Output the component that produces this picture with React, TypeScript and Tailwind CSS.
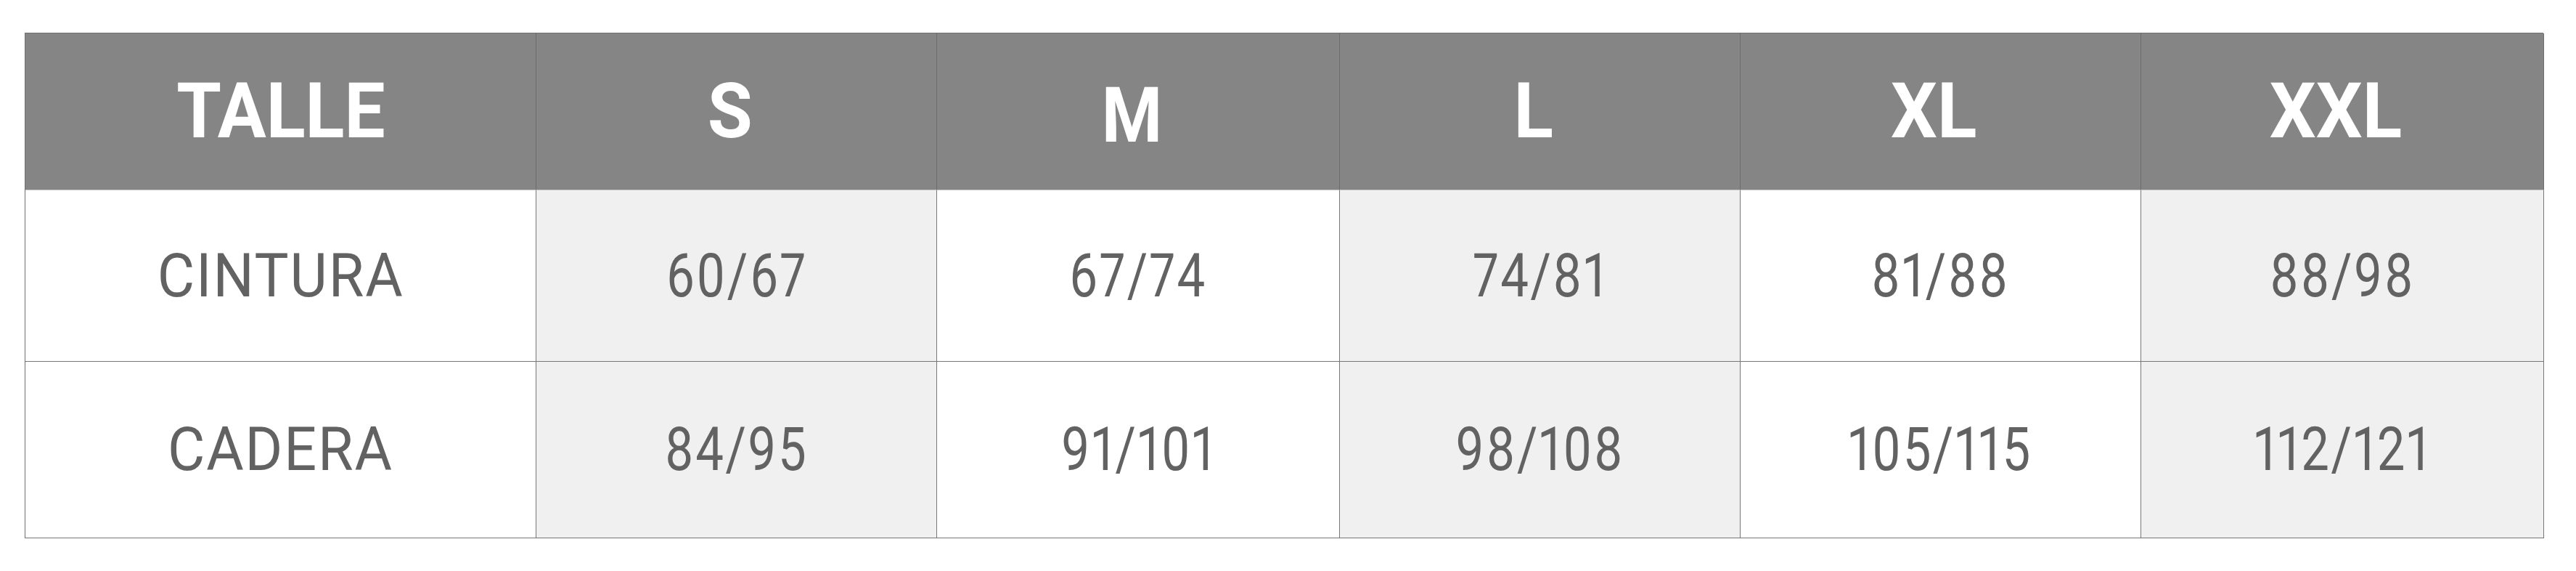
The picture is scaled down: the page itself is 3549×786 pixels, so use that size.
const sizes = ["S", "M", "L", "XL", "XXL"];

const rows = [
  { label: "CINTURA", values: ["60/67", "67/74", "74/81", "81/88", "88/98"], h: "h-[236px]" },
  { label: "CADERA", values: ["84/95", "91/101", "98/108", "105/115", "112/121"], h: "h-[243px]" },
];

function Cond({ children, className }: { children: React.ReactNode; className?: string }) {
  return <span className={"inline-block " + (className ?? "")}>{children}</span>;
}

export default function App() {
  return (
    <div className="min-h-[786px] w-[3549px] bg-white pl-[34px] pt-[45px] font-['Roboto',sans-serif]">
      <div className="grid w-[3470px] grid-cols-[704px_552px_555px_552px_552px_555px] border-l border-t border-[#707070]">
        <div className="flex h-[216px] items-center justify-center border-b border-r border-b-[#c4c4c4] border-r-[#6c6c6c] bg-[#858585] text-[106px] font-bold text-white">
          <Cond className="scale-x-[0.94]">TALLE</Cond>
        </div>
        {sizes.map((s) => (
          <div
            key={s}
            className="flex h-[216px] items-center justify-center border-b border-r border-b-[#c4c4c4] border-r-[#6c6c6c] bg-[#858585] pr-[18px] text-[106px] font-bold text-white"
          >
            <Cond className={s === "M" ? "translate-y-[6px] scale-x-[0.9]" : "scale-x-[0.95]"}>{s}</Cond>
          </div>
        ))}

        {rows.map((r) => (
          <div key={r.label} className="contents">
            <div className={`flex ${r.h} items-center justify-center border-b border-r border-[#777777] bg-white text-[84px] text-[#626262]`}>
              <Cond className="scale-x-[0.94] tracking-[2px]">{r.label}</Cond>
            </div>
            {r.values.map((v, i) => (
              <div
                key={v}
                className={`flex ${r.h} items-center justify-center border-b border-r border-[#777777] text-[84px] text-[#626262] proportional-nums ${
                  i % 2 === 0 ? "bg-[#f0f0f0]" : "bg-white"
                }`}
              >
                <Cond className="scale-x-[0.82] tracking-[3px]">{v}</Cond>
              </div>
            ))}
          </div>
        ))}
      </div>
    </div>
  );
}
